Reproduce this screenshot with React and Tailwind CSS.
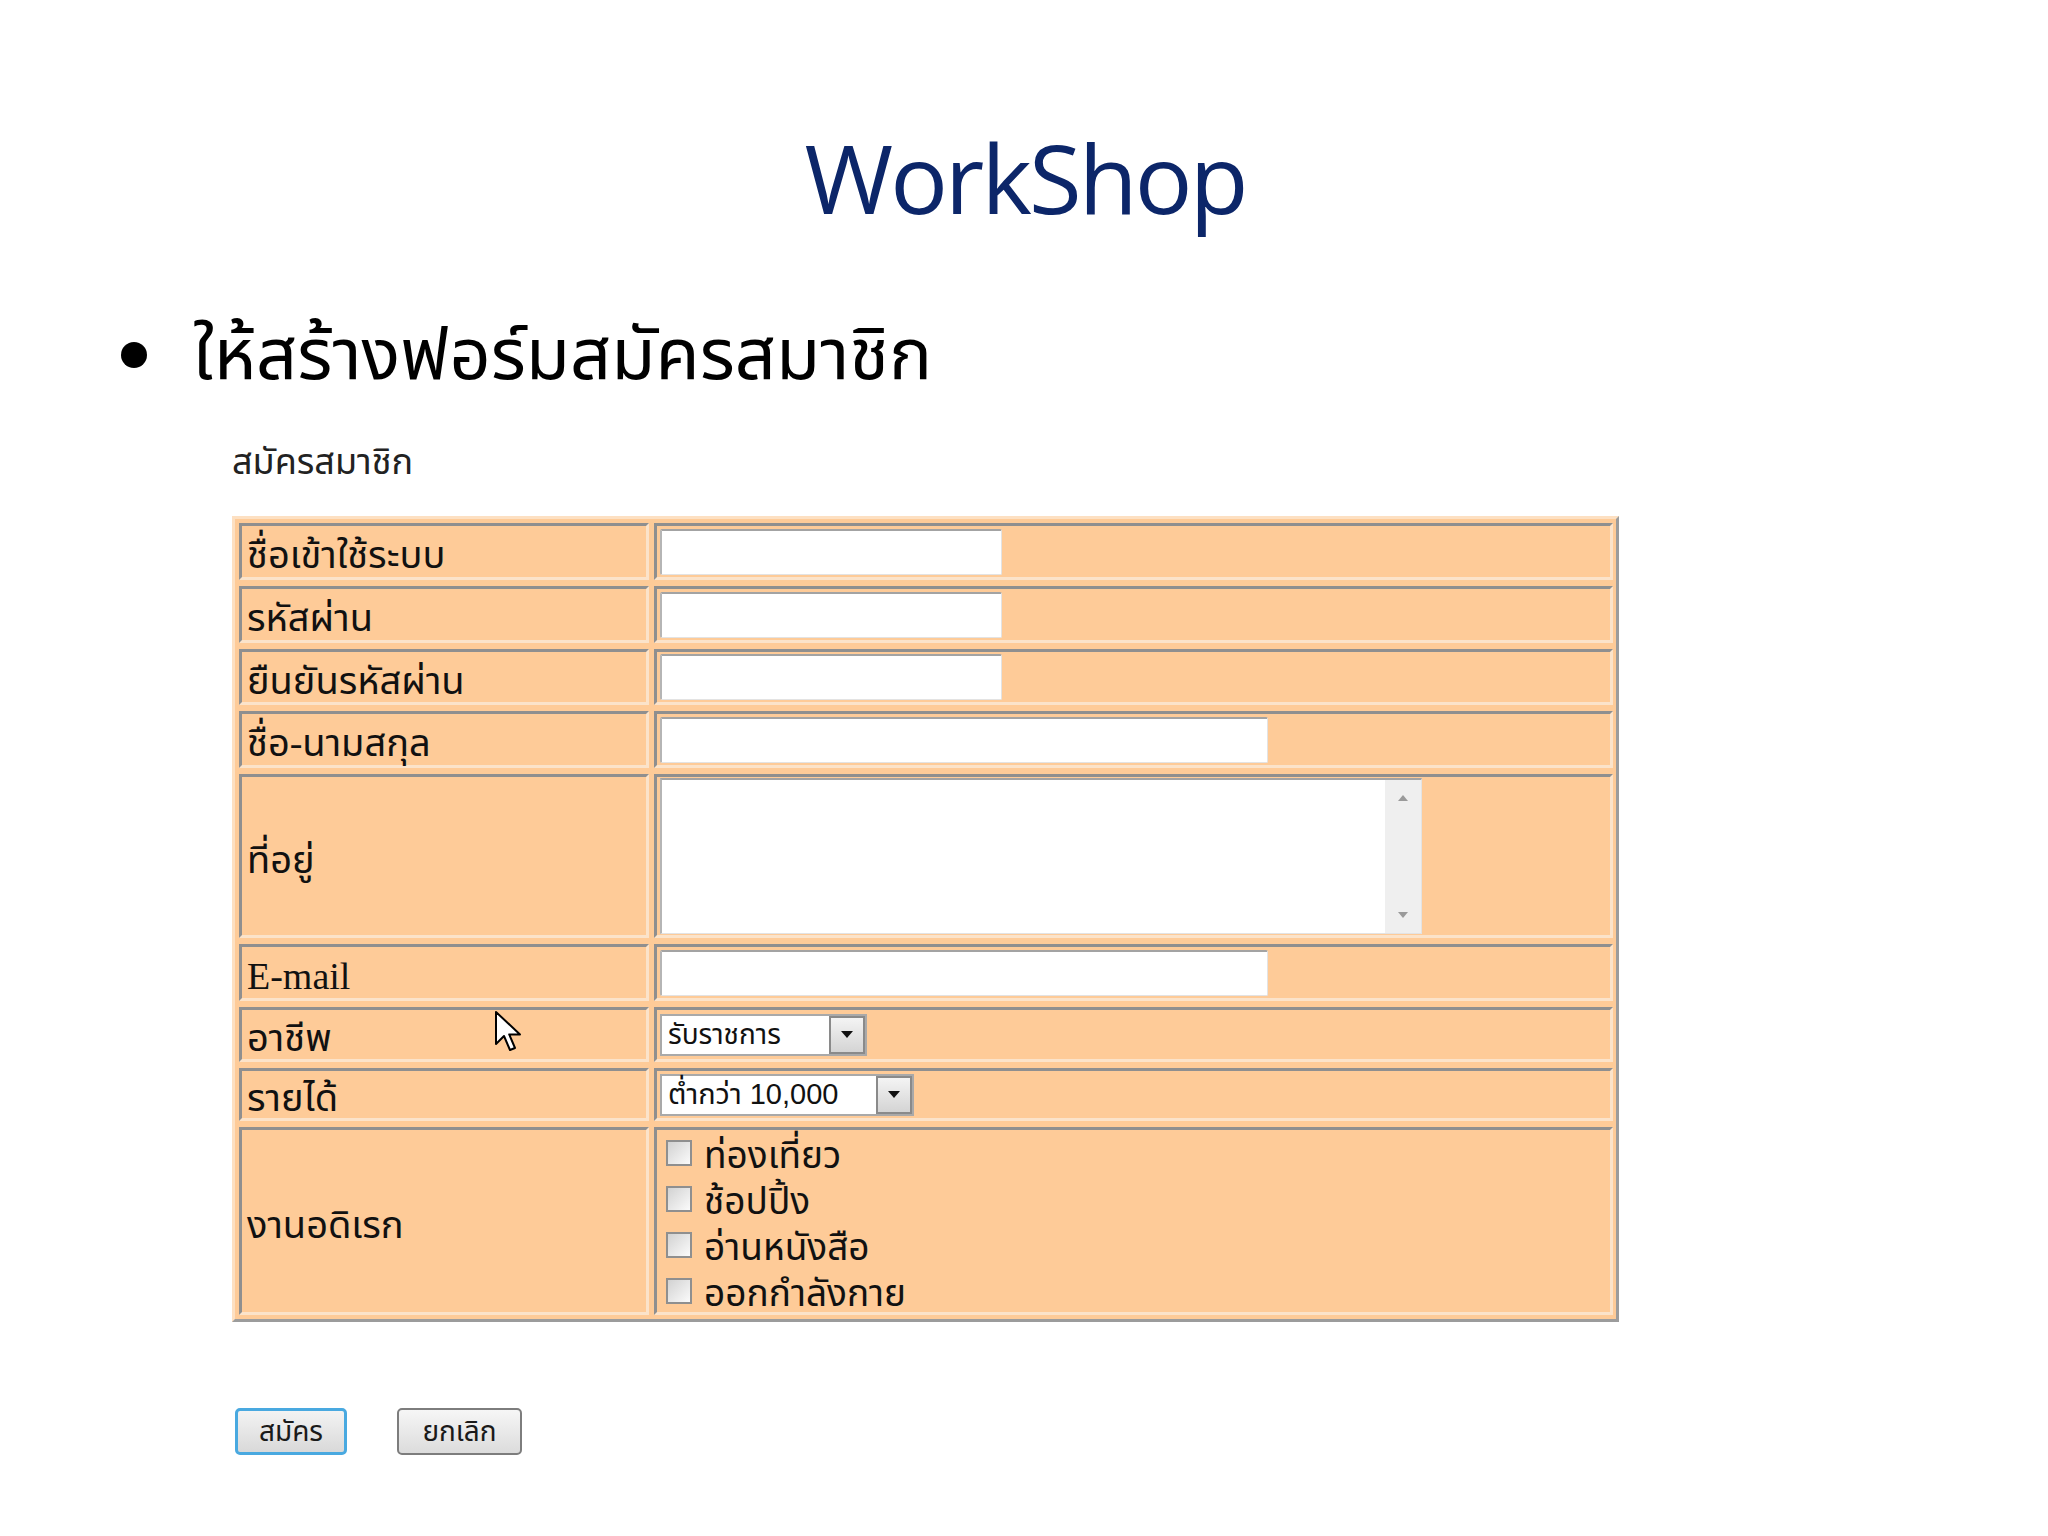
import React from "react";

const thai = "font-['Liberation_Serif','Noto_Sans_Thai','Loma','Garuda',serif]";
const thaiSans = "font-['Liberation_Sans','Noto_Sans_Thai','Loma','Garuda',sans-serif]";

const rows = [
  { label: "ชื่อเข้าใช้ระบบ", h: "h-[57px]", kind: "short" },
  { label: "รหัสผ่าน", h: "h-[57px]", kind: "short" },
  { label: "ยืนยันรหัสผ่าน", h: "h-[56px]", kind: "short" },
  { label: "ชื่อ-นามสกุล", h: "h-[57px]", kind: "long" },
  { label: "ที่อยู่", h: "h-[164px]", kind: "area" },
  { label: "E-mail", h: "h-[57px]", kind: "long" },
  { label: "อาชีพ", h: "h-[55px]", kind: "job" },
  { label: "รายได้", h: "h-[53px]", kind: "income" },
  { label: "งานอดิเรก", h: "h-[188px]", kind: "hobby" },
];

function TextBox({ wide }) {
  return (
    <div
      className={`${wide ? "w-[608px]" : "w-[342px]"} h-[46px] bg-white border-t-2 border-l-2 border-t-[#a3a3a3] border-l-[#b5b5b5] border-r border-b border-r-[#e3e3e3] border-b-[#e3e3e3] rounded-[2px]`}
    />
  );
}

function Select({ text, width, textClass }) {
  return (
    <div className={`${width} h-[42px] flex bg-white border-2 border-[#a9a9a9]`}>
      <div className={`flex-1 flex items-center pl-[6px] text-[#111] ${textClass}`}>{text}</div>
      <div className="w-[36px] h-full flex items-center justify-center bg-gradient-to-b from-[#f4f4f4] to-[#d4d4d4] border-2 border-[#8a8a8a]">
        <svg width="14" height="9" viewBox="0 0 14 9">
          <path d="M1 1 L13 1 L7 8 Z" fill="#111" />
        </svg>
      </div>
    </div>
  );
}

function Check({ label }) {
  return (
    <div className="flex items-center h-[46px]">
      <div className="w-[26px] h-[26px] border-2 border-[#8f8f8f] bg-gradient-to-br from-[#d2d2d2] to-[#fbfbfb] ml-[6px] mr-[12px]" />
      <span className={`${thai} text-[37px] leading-none text-[#111] pt-[4px]`}>{label}</span>
    </div>
  );
}

function ValueCell({ kind }) {
  if (kind === "short") return <TextBox />;
  if (kind === "long") return <TextBox wide />;
  if (kind === "area")
    return (
      <div className="w-[762px] h-[156px] flex bg-white border-t-2 border-l-2 border-t-[#a3a3a3] border-l-[#b5b5b5] border-r border-b border-r-[#e3e3e3] border-b-[#e3e3e3]">
        <div className="flex-1" />
        <div className="w-[36px] h-full bg-[#efefef] flex flex-col items-center justify-between py-[14px]">
          <svg width="12" height="8" viewBox="0 0 12 8">
            <path d="M1 7 L11 7 L6 1 Z" fill="#9a9a9a" />
          </svg>
          <svg width="12" height="8" viewBox="0 0 12 8">
            <path d="M1 1 L11 1 L6 7 Z" fill="#9a9a9a" />
          </svg>
        </div>
      </div>
    );
  if (kind === "job")
    return <Select text="รับราชการ" width="w-[207px]" textClass={`${thaiSans} text-[28px]`} />;
  if (kind === "income")
    return <Select text="ต่ำกว่า 10,000" width="w-[254px]" textClass={`${thaiSans} text-[29px]`} />;
  return (
    <div className="flex flex-col pt-[2px]">
      <Check label="ท่องเที่ยว" />
      <Check label="ช้อปปิ้ง" />
      <Check label="อ่านหนังสือ" />
      <Check label="ออกกำลังกาย" />
    </div>
  );
}

function Cursor() {
  return (
    <svg className="absolute left-[494px] top-[1010px]" width="30" height="46" viewBox="0 0 15 23">
      <path
        d="M1 1 L1 17 L5 13 L8 20 L10.5 19 L7.6 12.2 L13 12.2 Z"
        fill="#fff"
        stroke="#000"
        strokeWidth="1"
        strokeLinejoin="round"
      />
    </svg>
  );
}

export default function App() {
  return (
    <div className="w-[2048px] h-[1536px] bg-white relative overflow-hidden">
      <div className="pt-[129px] flex justify-center">
        <h1 className="font-['Open_Sans',sans-serif] text-[96px] leading-none tracking-[-0.03em] text-[#0c2669] pl-[2px]">
          WorkShop
        </h1>
      </div>

      <div className="flex items-center pl-[121px] mt-[94px]">
        <div className="w-[26px] h-[26px] rounded-full bg-black mr-[46px]" />
        <div className={`${thai} text-[72px] leading-none text-black`}>ให้สร้างฟอร์มสมัครสมาชิก</div>
      </div>

      <div className="pl-[232px]">
        <div className={`${thai} text-[36px] leading-none text-[#222] mt-[53px]`}>สมัครสมาชิก</div>

        <div className="mt-[36px] w-[1387px] bg-[#fecb98] border-[3px] border-t-[#fde0c2] border-l-[#fde0c2] border-r-[#9c9c9c] border-b-[#9c9c9c] p-[4px]">
          <div className="grid grid-cols-[410px_959px] gap-x-[5px] gap-y-[6px]">
            {rows.map((r) => (
              <React.Fragment key={r.label}>
                <div
                  className={`${r.h} flex items-center pl-[5px] border-[3px] border-t-[#8f8f8f] border-l-[#8f8f8f] border-r-[#fbe3ca] border-b-[#fbe3ca] bg-[#fecb98]`}
                >
                  <span className={`${thai} text-[38px] leading-none text-[#111] pt-[7px]`}>{r.label}</span>
                </div>
                <div
                  className={`${r.h} flex items-center pl-[3px] border-[3px] border-t-[#8f8f8f] border-l-[#8f8f8f] border-r-[#fbe3ca] border-b-[#fbe3ca] bg-[#fecb98]`}
                >
                  <ValueCell kind={r.kind} />
                </div>
              </React.Fragment>
            ))}
          </div>
        </div>

        <div className="flex gap-[50px] mt-[86px] pl-[3px]">
          <button className="w-[112px] h-[47px] rounded-[5px] border-[3px] border-[#49a9e0] bg-gradient-to-b from-[#f3f3f3] to-[#d9d9d9] flex items-center justify-center">
            <span className={`${thaiSans} text-[28px] leading-none text-[#1a1a1a]`}>สมัคร</span>
          </button>
          <button className="w-[125px] h-[47px] rounded-[5px] border-2 border-[#7d7d7d] bg-gradient-to-b from-[#f6f6f6] to-[#dcdcdc] flex items-center justify-center">
            <span className={`${thaiSans} text-[28px] leading-none text-[#1a1a1a]`}>ยกเลิก</span>
          </button>
        </div>
      </div>

      <Cursor />
    </div>
  );
}
